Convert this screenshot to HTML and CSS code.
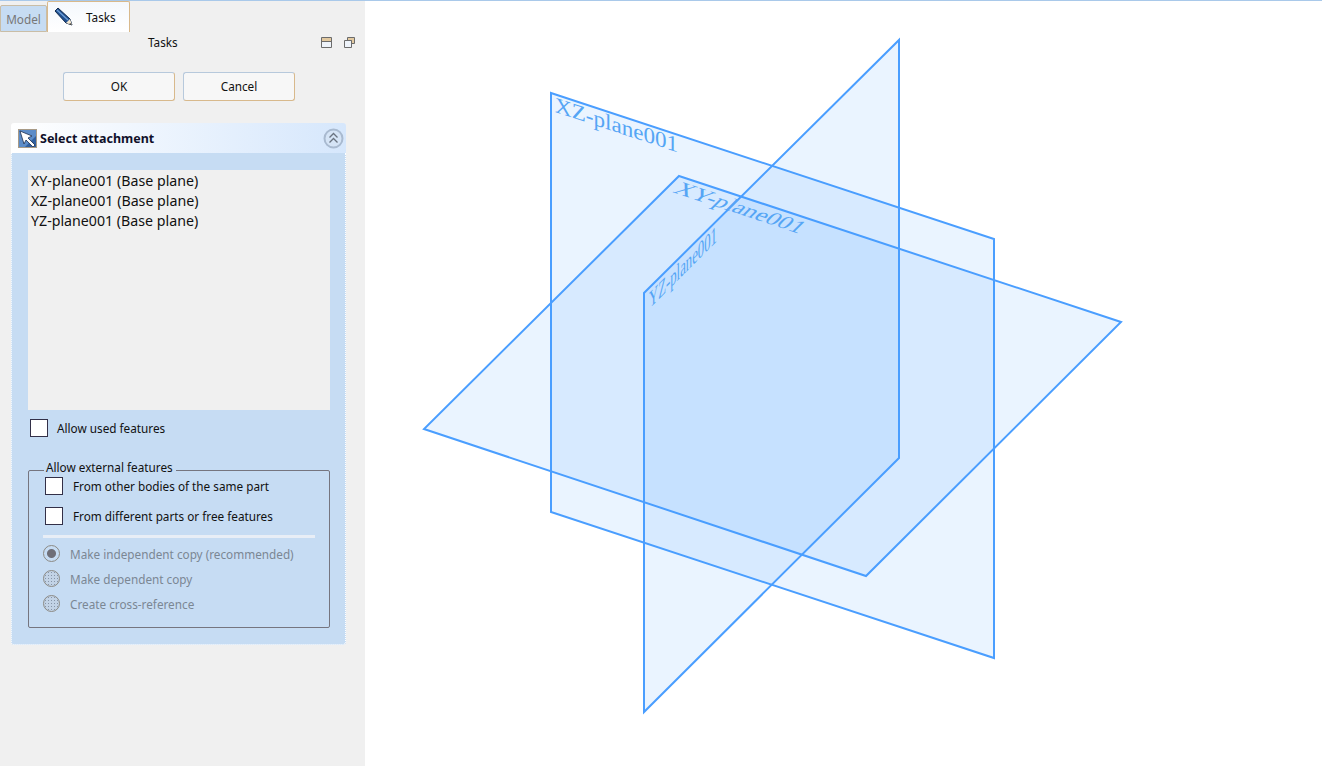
FILE: index.html
```html
<!DOCTYPE html>
<html lang="en">
<head>
  <meta charset="UTF-8">
  <title>Select attachment</title>
  <link rel="stylesheet" href="styles.css">
</head>
<body>
  <div class="app">
    <aside class="sidebar">
      <div class="tabs">
        <div class="tab tab-model">Model</div>
        <div class="tab tab-tasks">
          <svg class="pencil" width="20" height="20" viewBox="0 0 20 20">
            <path d="M1 4 L4 1 L16 12 L18 18 L12 16 Z" fill="#1f4f8f" stroke="#10294d" stroke-width="1"/>
            <path d="M3 3 L14 13" stroke="#6f9fd8" stroke-width="1.4"/>
            <path d="M12 16 L16 12 L18 18 Z" fill="#f3e7d0"/>
            <path d="M16 16 L18 18 L15.5 17.2 Z" fill="#111"/>
          </svg>
          <span>Tasks</span>
        </div>
      </div>
      <div class="dock-title">
        <span class="dock-name">Tasks</span>
        <svg class="dock-icon dock-float" width="11" height="11" viewBox="0 0 11 11">
          <rect x="1" y="1" width="9" height="9" fill="#eef3fa"/>
          <rect x="1" y="1" width="9" height="3" fill="#e2c9a0"/>
          <path d="M.5 .5h10v10h-10z M1 4.5h9" fill="none" stroke="#6b6b6b"/>
        </svg>
        <svg class="dock-icon" width="11" height="11" viewBox="0 0 11 11">
          <path d="M3.5 .5h7v6h-3v-3h-4z" fill="#e2c9a0" stroke="#6b6b6b"/>
          <path d="M.5 3.5h7v7h-7z" fill="#eef3fa" stroke="#6b6b6b"/>
        </svg>
      </div>
      <div class="buttons">
        <button class="btn">OK</button>
        <button class="btn">Cancel</button>
      </div>
      <section class="panel">
        <header class="panel-head">
          <svg class="cursor-icon" width="19" height="19" viewBox="0 0 19 19">
            <rect width="19" height="19" fill="#2f5f9f"/>
            <path d="M0 0h19v6L6 19H0z" fill="#5c8cc8"/>
            <rect x=".5" y=".5" width="18" height="18" fill="none" stroke="#a89a86"/>
            <path d="M2 2 L14 7 L10 9 L17 16 L15 18 L8 11 L6 15 Z" fill="#fff" stroke="#1c2f4f" stroke-width="0.8"/>
          </svg>
          <span class="panel-title">Select attachment</span>
          <svg class="collapse" width="21" height="21" viewBox="0 0 21 21">
            <circle cx="10.5" cy="10.5" r="9" fill="#d5e4f6" stroke="#a9bad0" stroke-width="2"/>
            <path d="M6.5 9.5 L10.5 5.5 L14.5 9.5 M6.5 14.5 L10.5 10.5 L14.5 14.5" fill="none" stroke="#6a7380" stroke-width="1.3"/>
          </svg>
        </header>
        <div class="panel-body">
          <ul class="list">
            <li>XY-plane001 (Base plane)</li>
            <li>XZ-plane001 (Base plane)</li>
            <li>YZ-plane001 (Base plane)</li>
          </ul>
          <label class="check check-used"><span class="box"></span>Allow used features</label>
          <fieldset class="group">
            <legend>Allow external features</legend>
            <label class="check check-ext"><span class="box"></span>From other bodies of the same part</label>
            <label class="check check-ext"><span class="box"></span>From different parts or free features</label>
            <div class="separator"></div>
            <label class="radio"><span class="dot dot-on"></span>Make independent copy (recommended)</label>
            <label class="radio"><span class="dot"></span>Make dependent copy</label>
            <label class="radio"><span class="dot"></span>Create cross-reference</label>
          </fieldset>
        </div>
      </section>
    </aside>
    <main class="viewport">
      <svg class="scene" width="957" height="766" viewBox="365 0 957 766">
        <g class="plane">
          <polygon points="551,93 994,239 994,658 551,512"/>
          <polygon points="679,176 1121,322 866,576 424,429"/>
          <polygon points="899,40 899,458 644,712 644,293"/>
        </g>
        <text class="plane-label" transform="matrix(1.05 0.345 0 1 555 112)">XZ-plane001</text>
        <text class="plane-label" transform="matrix(1.08 0.355 -0.7 0.7 672 192)">XY-plane001</text>
        <text class="plane-label" transform="matrix(0.58 -0.58 0 1.1 649 309)">YZ-plane001</text>
      </svg>
    </main>
  </div>
</body>
</html>
```

FILE: styles.css
```css
* {
  box-sizing: border-box;
}

html, body {
  margin: 0;
  height: 100%;
  overflow: hidden;
}

body {
  font-family: "Noto Sans", "Open Sans", sans-serif;
  font-size: 11.75px;
  color: #111;
  background-color: #fff;
}

.app {
  display: flex;
  height: 766px;
  border-top: 1px solid #a9c9ea;
}

.sidebar {
  width: 365px;
  flex-shrink: 0;
  background-color: #f0f0f0;
}

.viewport {
  flex: 1;
  margin-top: -1px;
}

.scene {
  display: block;
}

.tabs {
  display: flex;
  align-items: flex-end;
  height: 31px;
}

.tab {
  border: 1px solid #d8b98c;
  border-radius: 2px 2px 0 0;
}

.tab-model {
  width: 47px;
  height: 27px;
  line-height: 26px;
  text-align: center;
  color: #777;
  background-color: #c6dcf3;
  border-color: #c9bda6;
}

.tab-tasks {
  display: flex;
  align-items: center;
  width: 83px;
  height: 31px;
  padding-left: 6px;
  background: linear-gradient(#f4f8fd, #fff);
  border-bottom: none;
}

.tab-tasks span {
  margin-left: 12px;
}

.dock-title {
  display: flex;
  align-items: center;
  height: 20px;
  padding-right: 10px;
}

.dock-name {
  flex: 1;
  padding-left: 148px;
}

.dock-icon {
  margin-left: 12px;
}

.buttons {
  display: flex;
  gap: 8px;
  margin: 20px 0 0 63px;
}

.btn {
  width: 112px;
  height: 29px;
  padding-bottom: 3px;
  font: inherit;
  color: #111;
  background: #f7f7f7;
  border: 1px solid #d8b98c;
  border-left-color: #b7c9dc;
  border-top-color: #b7c9dc;
  border-radius: 3px;
}

.panel {
  width: 335px;
  margin: 22px 0 0 11px;
}

.panel-head {
  display: flex;
  align-items: center;
  height: 30px;
  padding: 0 2px 0 7px;
  background: linear-gradient(90deg, #fff, #d6e7fc);
  border-radius: 3px 3px 0 0;
}

.panel-title {
  flex: 1;
  margin-left: 3px;
  font-size: 12.5px;
  font-weight: bold;
  color: #10102a;
}

.panel-body {
  height: 492px;
  padding: 17px 15px 0 16px;
  background-color: #c6dcf3;
  border: 1px dotted #fff;
  border-top: none;
  border-radius: 0 0 3px 3px;
}

.list {
  list-style: none;
  height: 240px;
  margin: 0;
  padding: 1px 3px;
  background-color: #f0f0f0;
  font-size: 14.2px;
  line-height: 20px;
}

.check {
  display: flex;
  align-items: center;
}

.box {
  width: 18px;
  height: 18px;
  background-color: #fff;
  border: 1px solid #333048;
}

.check-used {
  margin: 9px 0 0 2px;
}

.check-used .box {
  margin-right: 9px;
}

.group {
  height: 168px;
  margin: 23px 0 0;
  padding: 0 14px 0 15px;
  border: 1px solid #75757f;
  border-radius: 2px;
}

.group legend {
  margin-left: 0;
  padding: 0 3px 6px 2px;
  line-height: 14px;
}

.check-ext {
  height: 18px;
  margin-bottom: 12px;
}

.check-ext:first-of-type {
  margin-top: -3px;
}

.check-ext .box {
  margin-right: 10px;
  margin-left: 1px;
}

.separator {
  height: 3px;
  margin: -2px 0 3px -1px;
  background-color: #e8eef6;
}

.radio {
  display: flex;
  align-items: center;
  height: 25px;
  margin-left: -1px;
  color: #7b8794;
}

.dot {
  width: 17px;
  height: 17px;
  margin-right: 10px;
  background-color: #c2d3e6;
  background-image: radial-gradient(#8795a8 0.6px, transparent 0.8px);
  background-size: 3px 3px;
  border: 1px solid #8c8a84;
  border-radius: 50%;
}

.dot-on {
  background: radial-gradient(circle, #6f6f78 0 4px, #c6dcf3 5px);
}

.plane polygon {
  fill: #46a0ff;
  fill-opacity: 0.115;
  stroke: #4a9eff;
  stroke-width: 2;
}

.plane-label {
  font-family: "Liberation Serif", serif;
  font-size: 22px;
  fill: #55a5f5;
}
```
